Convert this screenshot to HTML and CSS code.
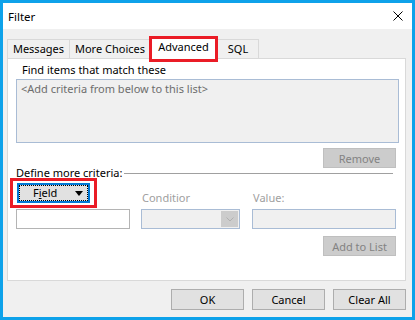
FILE: index.html
```html
<!DOCTYPE html>
<html>
  <head>
    <title>Filter</title>
    <meta http-equiv="Content-Type" content="text/html; charset=UTF-8"/>
    <link rel="stylesheet" href="styles.css">
  </head>
  <body>
    <div class="window">
      <div class="titlebar">
        <span class="title">Filter</span>
        <svg class="close" width="10" height="10" viewBox="0 0 10 10">
          <path d="M0.5 0.5 L9.5 9.5 M9.5 0.5 L0.5 9.5" stroke="#000" stroke-width="1" fill="none"/>
        </svg>
      </div>
      <div class="client">
        <div class="tabs">
          <div class="tab tab-messages">Messages</div>
          <div class="tab tab-more">More Choices</div>
          <div class="tab tab-active">Advanced</div>
          <div class="tab tab-sql">SQL</div>
        </div>
        <div class="panel">
          <div class="find-label">Find items that match these</div>
          <div class="listbox">&lt;Add criteria from below to this list&gt;</div>
          <div class="right-row">
            <button class="btn btn-disabled">Remove</button>
          </div>
          <div class="criteria-head">
            <span>Define more criteria:</span>
            <span class="rule"></span>
          </div>
          <div class="criteria">
            <div class="annot">
              <div class="field-btn">
                <div class="focus">
                  <span class="field-text">F<u>i</u>eld</span>
                  <span class="arrow"></span>
                </div>
              </div>
            </div>
            <div class="label-disabled">Conditior</div>
            <div class="label-disabled">Value:</div>
            <div class="input"></div>
            <div class="combo">
              <span class="combo-drop">
                <svg width="8" height="5" viewBox="0 0 8 5">
                  <path d="M0.5 0.5 L4 4 L7.5 0.5" stroke="#b0b0b0" stroke-width="1" fill="none"/>
                </svg>
              </span>
            </div>
            <div class="input input-disabled"></div>
          </div>
          <div class="right-row add-row">
            <button class="btn btn-disabled">Add to List</button>
          </div>
        </div>
        <div class="footer">
          <button class="btn btn-foot">OK</button>
          <button class="btn btn-foot">Cancel</button>
          <button class="btn btn-foot">Clear All</button>
        </div>
      </div>
    </div>
  </body>
</html>
```

FILE: styles.css
```css
body {
  margin: 0;
  font-family: 'Noto Sans', 'DejaVu Sans', sans-serif;
  font-size: 11px;
  color: #000;
}

.window {
  box-sizing: border-box;
  width: 415px;
  height: 320px;
  border: 3px solid #0ea2ea;
  display: flex;
  flex-direction: column;
}

.titlebar {
  height: 26px;
  background: #fff;
  display: flex;
  align-items: center;
  justify-content: space-between;
  padding: 0 9px 0 5px;
}

.title {
  font-size: 11.5px;
}

.client {
  flex: 1;
  background: #f0f0f0;
  padding: 7px 6px 7px 4px;
  display: flex;
  flex-direction: column;
}

/* tab strip */
.tabs {
  display: flex;
  align-items: flex-end;
  height: 22px;
}

.tab {
  box-sizing: border-box;
  height: 19px;
  line-height: 18px;
  border: 1px solid #d9d9d9;
  border-bottom: 0;
  text-align: center;
}

.tab-messages {
  width: 63px;
}

.tab-more {
  width: 82px;
  margin-left: -1px;
}

.tab-active {
  position: relative;
  z-index: 2;
  width: 69px;
  height: 26px;
  margin-left: -2px;
  margin-bottom: -4px;
  line-height: 16px;
  background: #fff;
  border: 3px solid #ea1c26;
}

.tab-sql {
  width: 41px;
  border-left: 0;
}

/* tab page */
.panel {
  flex: 1;
  background: #fff;
  border: 1px solid #d9d9d9;
  padding: 3px 0 0 0;
}

.find-label {
  line-height: 15px;
  margin-left: 14px;
}

.listbox {
  box-sizing: border-box;
  height: 64px;
  margin: 2px 6px 0 8px;
  border: 1px solid #a9bcd5;
  background: #f0f0f0;
  padding: 1px 4px;
  line-height: 15px;
  color: #6d6d6d;
}

.right-row {
  display: flex;
  justify-content: flex-end;
  padding-right: 9px;
  margin-top: 5px;
}

.btn {
  box-sizing: border-box;
  width: 73px;
  height: 20px;
  padding: 0;
  font-family: inherit;
  font-size: 11px;
  color: #000;
  background: #e1e1e1;
  border: 1px solid #adadad;
}

.btn-disabled {
  background: #cccccc;
  border-color: #bfbfbf;
  color: #838383;
}

.criteria-head {
  display: flex;
  align-items: center;
  line-height: 15px;
  margin: -3px 12px 0 8px;
}

.rule {
  flex: 1;
  height: 0;
  border-top: 1px solid #a0a0a0;
  margin: 1px 0 0 2px;
}

.criteria {
  display: grid;
  grid-template-columns: 114px 99px 145px;
  column-gap: 11px;
  row-gap: 1px;
  margin: -2px 0 0 8px;
  align-items: end;
}

.criteria > :nth-child(3),
.criteria > :nth-child(6) {
  margin-left: 1px;
}

.annot {
  justify-self: start;
  margin-left: -6px;
  border: 3px solid #ea1c26;
  padding: 2px 4px;
}

.field-btn {
  box-sizing: border-box;
  width: 73px;
  height: 20px;
  border: 2px solid #0078d7;
  background: #e1e1e1;
}

.focus {
  box-sizing: border-box;
  height: 100%;
  border: 1px dotted #000;
  display: flex;
  align-items: center;
  line-height: 14px;
}

.field-text {
  margin-left: 13px;
}

.field-text u {
  text-decoration-thickness: 1px;
}

.arrow {
  margin-left: auto;
  margin-right: 4px;
  width: 0;
  height: 0;
  border-left: 4px solid transparent;
  border-right: 4px solid transparent;
  border-top: 5px solid #000;
}

.label-disabled {
  color: #a0a0a0;
  line-height: 15px;
  padding: 0 0 3px 1px;
}

.input {
  box-sizing: border-box;
  height: 20px;
  border: 1px solid #b4b4b4;
  background: #fff;
}

.input-disabled {
  border-color: #a9bcd5;
  background: #f0f0f0;
}

.combo {
  box-sizing: border-box;
  height: 20px;
  border: 1px solid #a9bcd5;
  background: #f0f0f0;
  display: flex;
  justify-content: flex-end;
  padding: 1px;
}

.combo-drop {
  width: 17px;
  background: #cccccc;
  display: flex;
  align-items: center;
  justify-content: center;
}

.add-row {
  margin-top: 7px;
}

.footer {
  display: flex;
  justify-content: flex-end;
  gap: 8px;
  margin-top: 8px;
}

.btn-foot {
  height: 21px;
}
```
